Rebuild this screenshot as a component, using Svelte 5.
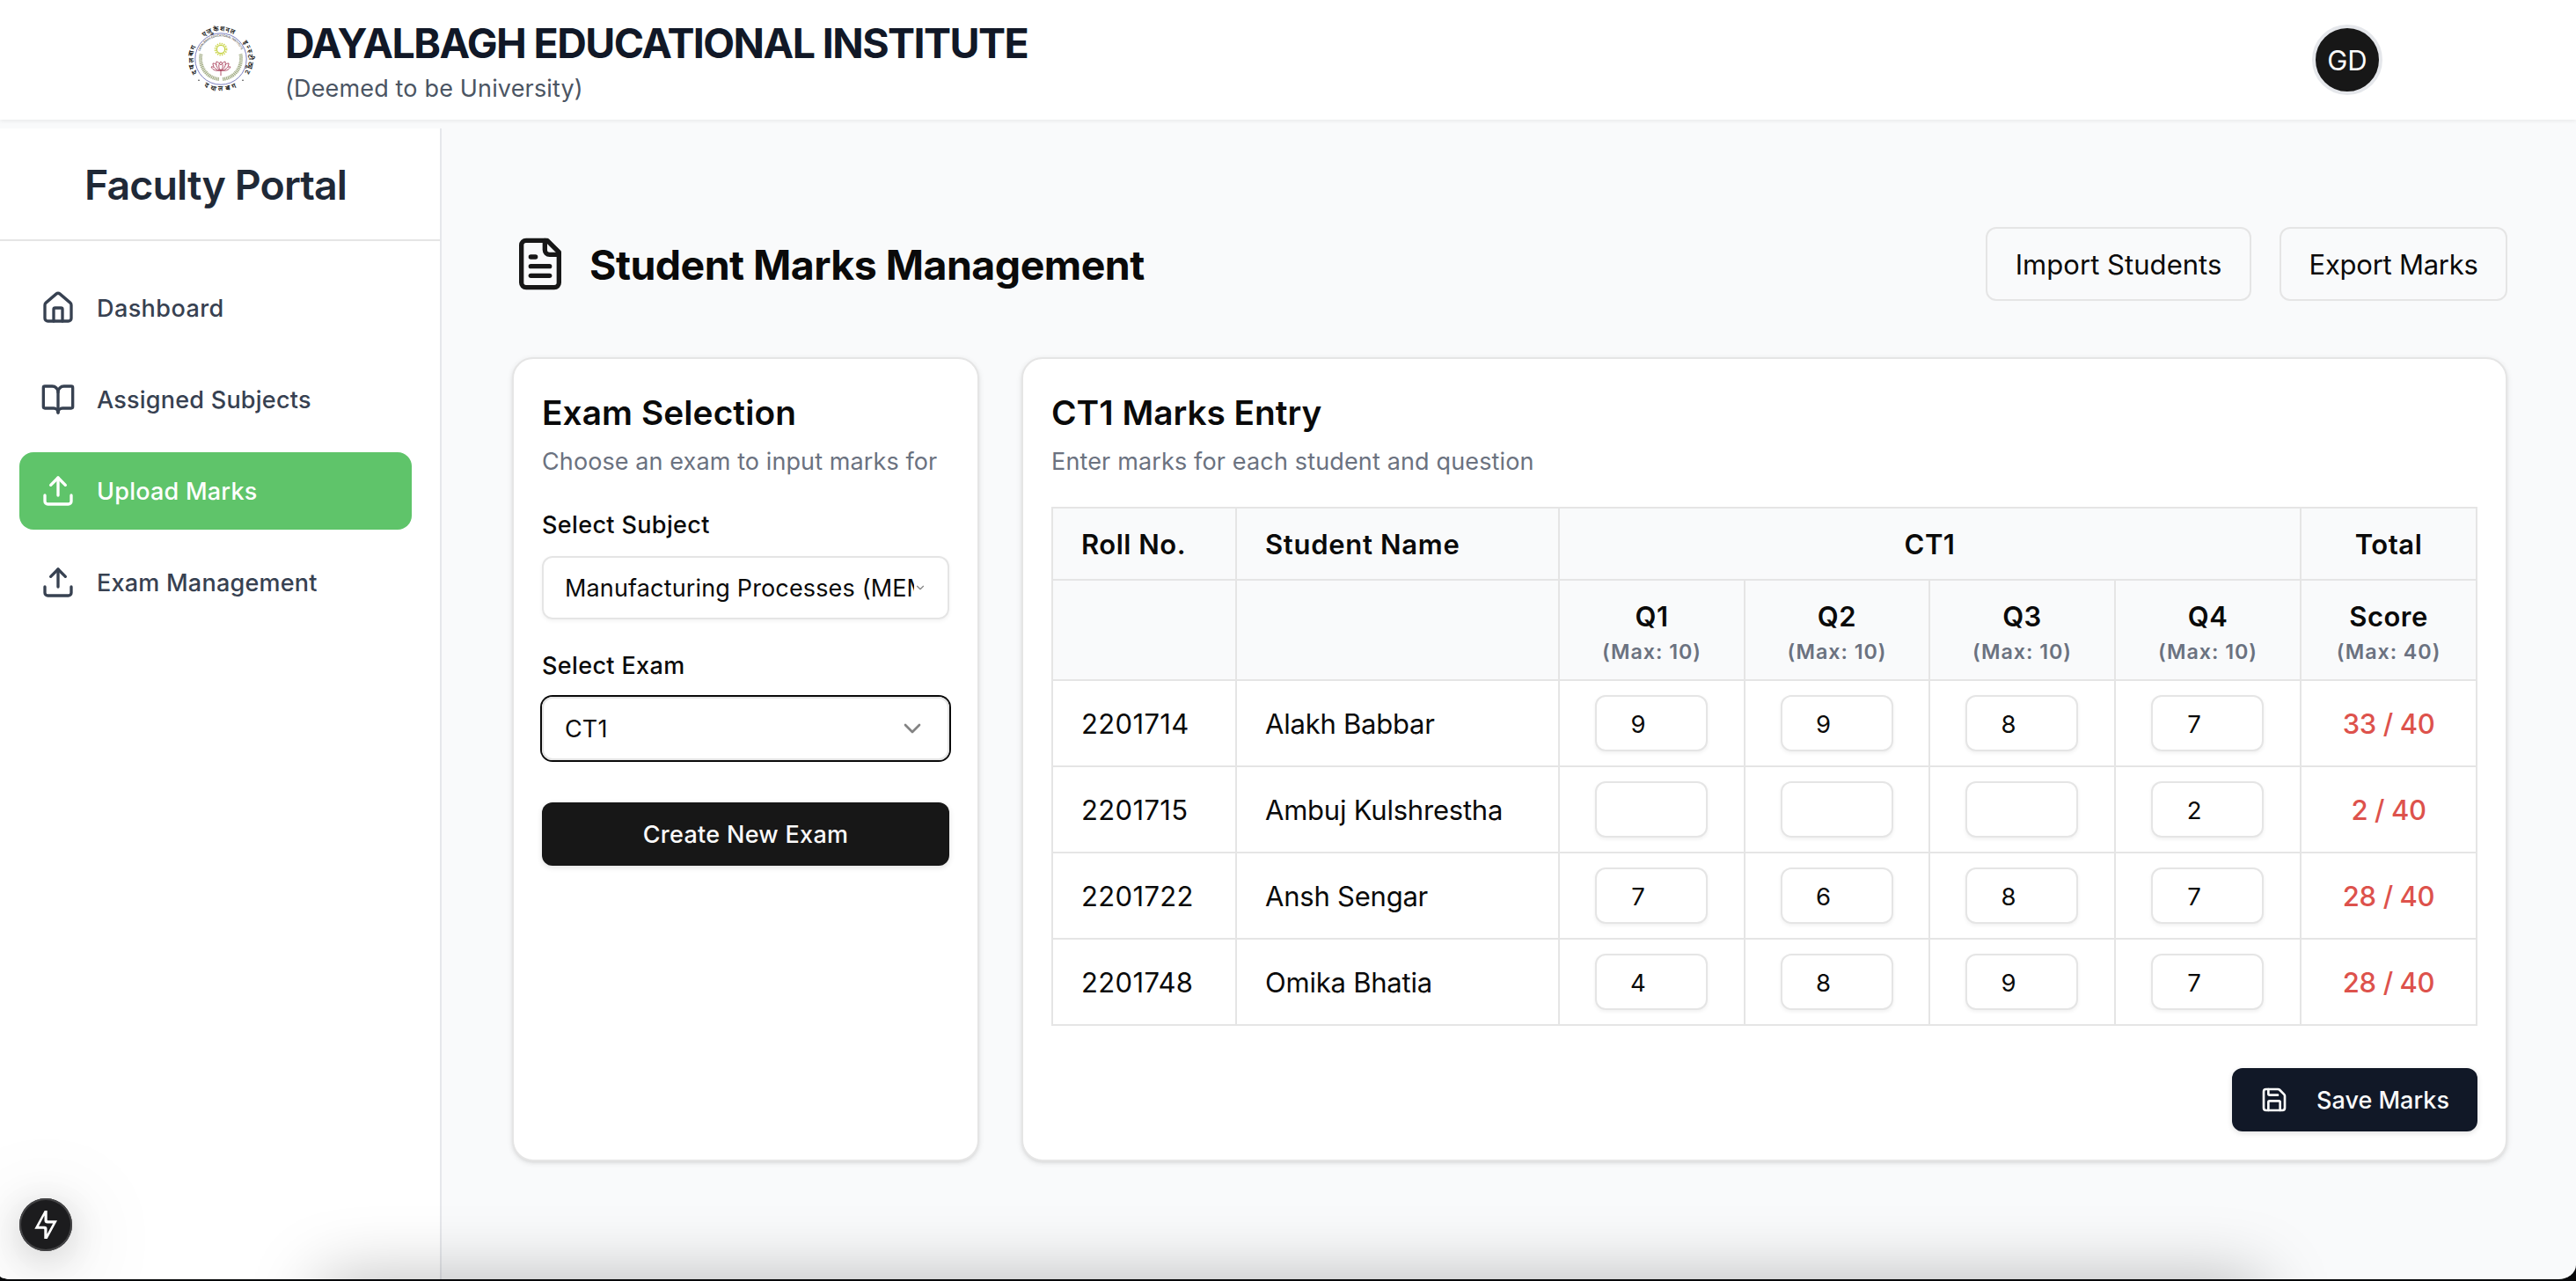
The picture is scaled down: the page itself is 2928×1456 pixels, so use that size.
<script>
  const navItems = [
    { label: 'Dashboard', icon: 'home', track: 'wide' },
    { label: 'Assigned Subjects', icon: 'book' },
    { label: 'Upload Marks', icon: 'upload', active: true },
    { label: 'Exam Management', icon: 'upload' }
  ];

  const questions = ['Q1', 'Q2', 'Q3', 'Q4'];

  let students = $state([
    { roll: '2201714', name: 'Alakh Babbar', marks: ['9', '9', '8', '7'] },
    { roll: '2201715', name: 'Ambuj Kulshrestha', marks: ['', '', '', '2'] },
    { roll: '2201722', name: 'Ansh Sengar', marks: ['7', '6', '8', '7'] },
    { roll: '2201748', name: 'Omika Bhatia', marks: ['4', '8', '9', '7'] }
  ]);

  const total = (marks) => marks.reduce((sum, mark) => sum + Number(mark), 0);
</script>

{#snippet icon(name)}
  <svg class="icon" viewBox="0 0 24 24" aria-hidden="true">
    {#if name === 'home'}
      <path d="M15 21v-8a1 1 0 0 0-1-1h-4a1 1 0 0 0-1 1v8" />
      <path d="M3 10a2 2 0 0 1 .709-1.528l7-5.999a2 2 0 0 1 2.582 0l7 5.999A2 2 0 0 1 21 10v9a2 2 0 0 1-2 2H5a2 2 0 0 1-2-2z" />
    {:else if name === 'book'}
      <path d="M12 7v14" />
      <path d="M3 18a1 1 0 0 1-1-1V4a1 1 0 0 1 1-1h5a4 4 0 0 1 4 4 4 4 0 0 1 4-4h5a1 1 0 0 1 1 1v13a1 1 0 0 1-1 1h-6a3 3 0 0 0-3 3 3 3 0 0 0-3-3z" />
    {:else if name === 'upload'}
      <path d="M21 15v4a2 2 0 0 1-2 2H5a2 2 0 0 1-2-2v-4" />
      <path d="m17 8-5-5-5 5" />
      <path d="M12 3v12" />
    {:else if name === 'file'}
      <path d="M15 2H6a2 2 0 0 0-2 2v16a2 2 0 0 0 2 2h12a2 2 0 0 0 2-2V7Z" />
      <path d="M14 2v4a2 2 0 0 0 2 2h4" />
      <path d="M10 9H8" />
      <path d="M16 13H8" />
      <path d="M16 17H8" />
    {:else if name === 'chevron'}
      <path d="m6 9 6 6 6-6" />
    {:else if name === 'save'}
      <path d="M15.2 3a2 2 0 0 1 1.4.6l3.8 3.8a2 2 0 0 1 .6 1.4V19a2 2 0 0 1-2 2H5a2 2 0 0 1-2-2V5a2 2 0 0 1 2-2z" />
      <path d="M17 21v-7a1 1 0 0 0-1-1H8a1 1 0 0 0-1 1v7" />
      <path d="M7 3v4a1 1 0 0 0 1 1h7" />
    {/if}
  </svg>
{/snippet}

<div class="app">
  <header class="topbar">
    <svg class="crest" viewBox="0 0 80 80" aria-hidden="true">
      <defs>
        <path id="ring-top" d="M12 55.2A31.5 31.5 0 1 1 64.8 57.1" />
        <path id="ring-bottom" d="M19.7 69.95A36.5 36.5 0 0 0 60.45 68.5" />
        <path id="ring-inner" d="M15.2 30A25.4 25.4 0 0 1 62.8 30" />
      </defs>
      <circle cx="39" cy="39" r="29.2" fill="none" stroke="#7d7fc0" stroke-width="1" />
      <g class="crest-text">
        <text><textPath href="#ring-top" startOffset="0" textLength="31">दयालबाग</textPath></text>
        <text><textPath href="#ring-top" startOffset="45.6" textLength="36">एजुकेशनल</textPath></text>
        <text><textPath href="#ring-top" startOffset="95.7" textLength="36">इन्स्टीट्यूट</textPath></text>
        <text><textPath href="#ring-bottom" startOffset="1" textLength="38">दयालबाग</textPath></text>
      </g>
      <circle cx="14" cy="63.3" r=".8" fill="#333" />
      <circle cx="64" cy="63.3" r=".8" fill="#333" />
      <text class="crest-inner"><textPath href="#ring-inner" textLength="60">DAYALBAGH EDUCATIONAL INSTITUTE</textPath></text>
      <g fill="none" stroke="#a3ad86" stroke-width="4" stroke-dasharray="1.3 .7">
        <path d="M16.6 33.5A23.2 23.2 0 0 0 37.5 62" />
        <path d="M61.4 33.5A23.2 23.2 0 0 1 40.5 62" />
      </g>
      <circle cx="39" cy="28" r="4.6" fill="none" stroke="#c3cf3d" stroke-width="1.2" />
      <circle cx="39" cy="28" r="6.4" fill="none" stroke="#ccd64e" stroke-width="2" stroke-dasharray="1.3 1.21" />
      <g fill="none" stroke="#a8405a" stroke-width=".9" stroke-linejoin="round">
        <path d="M39 42c-3 3-3 7 0 10c3-3 3-7 0-10z" />
        <path d="M34 42c-1 5 1 8 5 10c4-2 6-5 5-10c-2 .5-4 2-5 4c-1-2-3-3.500-5-4z" />
        <path d="M30 44c0 5 4 8 9 8s9-3 9-8c-2 0-3 .5-4 2M30 44c2 0 3 .5 4 2" />
        <path d="M28 48c2 4 6 5 11 4c5 1 9 0 11-4c-1-.5-2 0-3 .5M28 48c1-.5 2 0 3 .5M39 52v6" />
      </g>
    </svg>
    <div class="institute">
      <h1>DAYALBAGH EDUCATIONAL INSTITUTE</h1>
      <p>(Deemed to be University)</p>
    </div>
    <div class="avatar">GD</div>
  </header>

  <div class="body">
    <aside class="sidebar">
      <h2>Faculty Portal</h2>
      <nav>
        {#each navItems as item}
          <a class:active={item.active} class:wide={item.track === 'wide'}>
            {@render icon(item.icon)}
            <span>{item.label}</span>
          </a>
        {/each}
      </nav>
    </aside>

    <main>
      <div class="heading">
        <div class="file-icon">{@render icon('file')}</div>
        <h2>Student Marks Management</h2>
        <button class="outline import">Import Students</button>
        <button class="outline export">Export Marks</button>
      </div>

      <div class="cards">
        <section class="card selection">
          <h3>Exam Selection</h3>
          <p class="desc">Choose an exam to input marks for</p>
          <div class="label">Select Subject</div>
          <div class="select">
            <span class="value">Manufacturing Processes (MEM</span>
            <span class="chevron narrow">{@render icon('chevron')}</span>
          </div>
          <div class="label second">Select Exam</div>
          <div class="select focused">
            <span class="value">CT1</span>
            <span class="chevron">{@render icon('chevron')}</span>
          </div>
          <button class="create">Create New Exam</button>
        </section>

        <section class="card entry">
          <h3>CT1 Marks Entry</h3>
          <p class="desc long">Enter marks for each student and question</p>
          <table>
            <colgroup>
              <col class="c-roll" />
              <col class="c-name" />
              <col class="c-q" />
              <col class="c-q2" />
              <col class="c-q" />
              <col class="c-q" />
              <col class="c-total" />
            </colgroup>
            <thead>
              <tr class="row-group">
                <th class="left">Roll No.</th>
                <th class="left">Student Name</th>
                <th colspan="4">CT1</th>
                <th>Total</th>
              </tr>
              <tr class="row-questions">
                <th></th>
                <th></th>
                {#each questions as q}
                  <th>{q}<div class="max">(Max: 10)</div></th>
                {/each}
                <th>Score<div class="max">(Max: 40)</div></th>
              </tr>
            </thead>
            <tbody>
              {#each students as student}
                <tr>
                  <td class="roll">{student.roll}</td>
                  <td class="name">{student.name}</td>
                  {#each student.marks as mark, i}
                    <td class="mark"><input bind:value={student.marks[i]} /></td>
                  {/each}
                  <td class="score">{total(student.marks)} / 40</td>
                </tr>
              {/each}
            </tbody>
          </table>
          <button class="save">{@render icon('save')}<span>Save Marks</span></button>
        </section>
      </div>
    </main>
  </div>

  <div class="dev-badge">
    <svg viewBox="0 0 60 60" aria-hidden="true">
      <path
        fill="#fff"
        fill-rule="evenodd"
        d="M28.700 14H31.700V24.500Q31.700 25.300 32.500 25.300H43L31.700 46H28.300V35.500Q28.300 34.700 27.500 34.700H17.300ZM28.500 19.500L22 31.700H28.500Q31.500 31.700 31.500 34.500V40.700L38.200 28.400H32Q28.600 28.400 28.500 25.500Z"
      />
    </svg>
  </div>
  <div class="dock-shadow"></div>
</div>

<style>
  :global(body) {
    margin: 0;
    background: #07080a;
  }

  .app,
  .app * {
    box-sizing: border-box;
  }

  .app {
    position: relative;
    display: flex;
    flex-direction: column;
    width: 2928px;
    height: 1454px;
    overflow: hidden;
    border-radius: 0 0 20px 14px / 0 0 16px 4px;
    background: #f9fafb;
    color: #0a0a0a;
    font-family: Inter, 'Liberation Sans', sans-serif;
    font-size: 31px;
  }

  h1,
  h2,
  h3,
  p {
    margin: 0;
  }

  button,
  input {
    font-family: inherit;
    color: inherit;
  }

  .icon {
    display: block;
    flex: none;
    width: 100%;
    height: 100%;
    fill: none;
    stroke: currentColor;
    stroke-width: 2;
    stroke-linecap: round;
    stroke-linejoin: round;
  }

  .topbar {
    position: relative;
    display: flex;
    align-items: center;
    gap: 32px;
    flex: none;
    height: 136px;
    padding: 0 220px 0 212px;
    background: #fff;
    box-shadow: 0 2px 4px rgba(0, 0, 0, 0.06);
  }

  .crest {
    width: 80px;
    height: 80px;
  }

  .crest-text {
    font-family: Inter, sans-serif;
    font-size: 7.6px;
    font-weight: 700;
    fill: #222;
  }

  .crest-inner {
    font-size: 3.2px;
    font-weight: 600;
    fill: #555;
  }

  .institute {
    flex: 1;
    padding-top: 1px;
  }

  h1 {
    font-size: 46.5px;
    line-height: 64px;
    font-weight: 700;
    letter-spacing: -1.56px;
    color: #111827;
  }

  .institute p {
    font-size: 27px;
    line-height: 40px;
    letter-spacing: 0.16px;
    color: #4b5563;
  }

  .avatar {
    display: flex;
    align-items: center;
    justify-content: center;
    width: 80px;
    height: 80px;
    padding-top: 1px;
    border: 4px solid #e5e7eb;
    border-radius: 50%;
    background: #171717;
    color: #fafafa;
  }

  .body {
    display: flex;
    flex: 1;
  }

  .sidebar {
    flex: none;
    width: 502px;
    margin-top: 10px;
    border-right: 2px solid #e5e7eb;
    background: #fff;
  }

  .sidebar h2 {
    height: 128px;
    padding-right: 10px;
    border-bottom: 2px solid #e5e5e5;
    text-align: center;
    font-size: 46.5px;
    line-height: 129px;
    font-weight: 600;
    letter-spacing: -0.9px;
    color: #1f2937;
  }

  nav {
    display: flex;
    flex-direction: column;
    gap: 16px;
    padding: 32px 32px 0 22px;
  }

  nav a {
    display: flex;
    align-items: center;
    gap: 24px;
    height: 88px;
    padding: 0 24px;
    border-radius: 16px;
    font-size: 27px;
    font-weight: 500;
    letter-spacing: 0.23px;
    color: #374151;
  }

  nav a.wide {
    letter-spacing: 0.42px;
  }

  nav a.active {
    background: #5fc46a;
    color: #fff;
  }

  nav .icon {
    width: 40px;
    height: 40px;
  }

  main {
    flex: 1;
    padding: 122px 78px 0 80px;
  }

  .heading {
    display: flex;
    align-items: center;
    height: 84px;
  }

  .file-icon {
    width: 64px;
    height: 64px;
    margin-right: 24px;
    color: #171717;
  }

  .heading h2 {
    flex: 1;
    padding-top: 2px;
    font-size: 46.5px;
    line-height: 64px;
    font-weight: 700;
    letter-spacing: -0.55px;
  }

  .outline {
    height: 84px;
    padding: 2px 0 0;
    border: 2px solid #e5e5e5;
    border-radius: 12px;
    background: transparent;
    font-size: 31px;
    line-height: 48px;
  }

  .import {
    width: 302px;
    margin-right: 32px;
    letter-spacing: 0.05px;
  }

  .export {
    width: 259px;
    letter-spacing: -0.25px;
  }

  .cards {
    display: grid;
    grid-template-columns: 531px 1fr;
    gap: 48px;
    margin-top: 64px;
  }

  .card {
    height: 914px;
    padding: 32px;
    border: 2px solid #e5e5e5;
    border-radius: 24px;
    background: #fff;
    box-shadow: 0 2px 6px rgba(0, 0, 0, 0.1), 0 2px 4px -2px rgba(0, 0, 0, 0.1);
  }

  h3 {
    font-size: 38.8px;
    line-height: 58px;
    font-weight: 600;
  }

  .selection h3 {
    letter-spacing: 0.1px;
  }

  .desc {
    margin-top: 7px;
    font-size: 27px;
    line-height: 40px;
    letter-spacing: 0.1px;
    color: #6b7280;
  }

  .desc.long {
    letter-spacing: 0.15px;
  }

  .label {
    margin: 32px 0 15px;
    font-size: 27px;
    line-height: 40px;
    font-weight: 500;
    letter-spacing: 0.36px;
  }

  .label.second {
    margin-top: 33px;
  }

  .select {
    display: flex;
    align-items: center;
    width: 463px;
    height: 72px;
    padding: 0 24px;
    border: 2px solid #e5e5e5;
    border-radius: 12px;
    box-shadow: 0 2px 4px rgba(0, 0, 0, 0.05);
  }

  .select.focused {
    box-shadow: 0 0 0 2px #0a0a0a;
  }

  .value {
    flex: 1;
    min-width: 0;
    padding-top: 1px;
    overflow: hidden;
    white-space: nowrap;
    font-size: 27px;
    line-height: 40px;
    letter-spacing: 0.15px;
  }

  .chevron {
    flex: none;
    width: 32px;
    height: 32px;
    opacity: 0.5;
  }

  .chevron.narrow {
    width: 14px;
  }

  .create {
    display: block;
    width: 463px;
    height: 72px;
    margin-top: 48px;
    padding: 0;
    border: 0;
    border-radius: 12px;
    background: #171717;
    box-shadow: 0 2px 6px rgba(0, 0, 0, 0.12);
    color: #fafafa;
    font-size: 27px;
    font-weight: 500;
    letter-spacing: 0.3px;
  }

  table {
    width: 1621px;
    margin-top: 31px;
    border: 0 solid #e5e5e5;
    border-width: 2px 0 0 2px;
    border-collapse: separate;
    border-spacing: 0;
    table-layout: fixed;
  }

  .c-roll {
    width: 209px;
  }

  .c-name {
    width: 367px;
  }

  .c-q {
    width: 211px;
  }

  .c-q2 {
    width: 210px;
  }

  .c-total {
    width: 200px;
  }

  th,
  td {
    height: 98px;
    padding: 0;
    border: 0 solid #e5e5e5;
    border-width: 0 2px 2px 0;
    font-size: 31px;
    line-height: 48px;
    text-align: center;
    vertical-align: middle;
  }

  th {
    padding-top: 1px;
    background: #f9fafb;
    font-weight: 600;
    letter-spacing: 0.5px;
  }

  .row-group th {
    height: 82px;
  }

  .row-questions th {
    height: 114px;
  }

  th.left,
  .roll,
  .name {
    padding-left: 32px;
    text-align: left;
  }

  th.left + th.left {
    letter-spacing: 0.7px;
  }

  .max {
    font-size: 23.3px;
    line-height: 32px;
    letter-spacing: 0.95px;
    color: #6b7280;
  }

  .roll {
    letter-spacing: 0.35px;
  }

  .name {
    letter-spacing: -0.22px;
  }

  .score {
    font-weight: 500;
    letter-spacing: -0.37px;
    color: #dd524c;
  }

  .roll,
  .name,
  .score {
    padding-top: 1px;
  }

  .mark {
    padding-right: 1px;
  }

  input {
    display: block;
    width: 128px;
    height: 64px;
    margin: 0 auto;
    padding: 2px 54px 0 24px;
    border: 2px solid #e5e5e5;
    border-radius: 12px;
    background: #fff;
    box-shadow: 0 2px 4px rgba(0, 0, 0, 0.06);
    font-size: 27.5px;
    text-align: center;
  }

  .save {
    display: flex;
    align-items: center;
    gap: 32px;
    width: 279px;
    height: 72px;
    margin: 48px 0 0 auto;
    padding: 0 32px;
    border: 0;
    border-radius: 12px;
    background: #111827;
    box-shadow: 0 2px 6px rgba(0, 0, 0, 0.12);
    color: #fafafa;
    font-size: 27px;
    font-weight: 500;
    white-space: nowrap;
  }

  .save .icon {
    width: 32px;
    height: 32px;
  }

  .dev-badge {
    position: absolute;
    left: 22px;
    top: 1362px;
    width: 60px;
    height: 60px;
    border-radius: 50%;
    background: #1c1c1e;
    box-shadow: inset 0 0 0 2px #434345, 0 8px 40px rgba(0, 0, 0, 0.16), 0 16px 110px rgba(0, 0, 0, 0.2);
  }

  .dev-badge svg {
    display: block;
    width: 60px;
    height: 60px;
  }

  .dock-shadow {
    position: absolute;
    left: 365px;
    right: 358px;
    bottom: -100px;
    height: 100px;
    box-shadow: 0 0 80px rgba(0, 0, 0, 0.27);
  }
</style>
